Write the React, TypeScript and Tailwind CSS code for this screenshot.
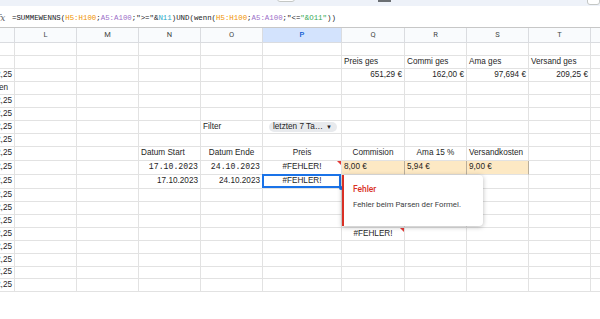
import React from "react";

type Cell = { t?: React.ReactNode; a?: "l" | "c" | "r"; c?: string; x?: React.ReactNode };

const widths = [
  "w-[15px]",
  "w-[62px]",
  "w-[62px]",
  "w-[62px]",
  "w-[62px]",
  "w-[79px]",
  "w-[63px]",
  "w-[62px]",
  "w-[62px]",
  "w-[62px]",
  "w-[20px]",
];
const letters = ["", "L", "M", "N", "O", "P", "Q", "R", "S", "T", ""];

const k: Cell = { t: "2,25", a: "r" };
const mono = "font-['Liberation_Mono',monospace] text-[7.3px]";
const beige = "bg-[#fde9c4] border-r-[#b9ae9b]";

function Tri() {
  return (
    <span className="absolute right-0 top-0 w-0 h-0 border-t-[4px] border-l-[4px] border-t-[#e53935] border-l-transparent" />
  );
}

function Popup() {
  return (
    <div className="absolute left-0 top-0 z-20 w-[141px] h-[51px] bg-white border-l-2 border-[#d93025] rounded-r-[4px] shadow-[0_1px_5px_rgba(0,0,0,0.28)] pl-[9px] pt-[9px] font-['Roboto',sans-serif]">
      <div className="text-[8.4px] leading-[10px] font-medium text-[#d93025]">Fehler</div>
      <div className="mt-[6px] text-[7.8px] leading-[10px] text-[#3c4043]">Fehler beim Parsen der Formel.</div>
    </div>
  );
}

const rows: { h: string; cells: Record<number, Cell> }[] = [
  { h: "h-[13px]", cells: {} },
  {
    h: "h-[13px]",
    cells: { 6: { t: "Preis ges" }, 7: { t: "Commi ges" }, 8: { t: "Ama ges" }, 9: { t: "Versand ges" } },
  },
  {
    h: "h-[13px]",
    cells: {
      0: k,
      6: { t: "651,29 €", a: "r" },
      7: { t: "162,00 €", a: "r" },
      8: { t: "97,694 €", a: "r" },
      9: { t: "209,25 €", a: "r" },
    },
  },
  { h: "h-[13px]", cells: { 0: { t: "en", a: "r", c: "pr-[6px]" } } },
  { h: "h-[13px]", cells: { 0: k } },
  { h: "h-[13px]", cells: { 0: k } },
  {
    h: "h-[13px]",
    cells: {
      0: k,
      4: { t: "Filter" },
      5: {
        t: (
          <span className="ml-[4px] flex items-center h-[10px] w-[68px] rounded-full bg-[#e8eaed] pl-[4px] pr-[5px] justify-between">
            <span>letzten 7 Ta…</span>
            <span className="text-[6px]">▼</span>
          </span>
        ),
      },
    },
  },
  { h: "h-[13px]", cells: { 0: k } },
  {
    h: "h-[14px]",
    cells: {
      0: k,
      3: { t: "Datum Start" },
      4: { t: "Datum Ende", a: "c" },
      5: { t: "Preis", a: "c" },
      6: { t: "Commision", a: "c" },
      7: { t: "Ama 15 %", a: "c" },
      8: { t: "Versandkosten" },
    },
  },
  {
    h: "h-[14px]",
    cells: {
      0: k,
      3: { t: "17.10.2023", a: "r", c: mono },
      4: { t: "24.10.2023", a: "r", c: mono },
      5: { t: "#FEHLER!", a: "c", x: <Tri /> },
      6: { t: "8,00 €", c: beige },
      7: { t: "5,94 €", c: beige },
      8: { t: "9,00 €", c: beige + " border-r-[#8d8576]" },
    },
  },
  {
    h: "h-[14px]",
    cells: {
      0: k,
      3: { t: "17.10.2023", a: "r" },
      4: { t: "24.10.2023", a: "r" },
      5: {
        t: "#FEHLER!",
        a: "c",
        x: (
          <>
            <span className="absolute -left-[1px] -top-[1px] right-0 bottom-0 z-10 border-2 border-[#1a73e8]" />
            <span className="absolute -right-[2px] -bottom-[2px] z-10 w-[4px] h-[4px] rounded-full bg-[#1a73e8]" />
          </>
        ),
      },
      6: { x: <Popup /> },
    },
  },
  { h: "h-[13px]", cells: { 0: k } },
  { h: "h-[13px]", cells: { 0: k } },
  { h: "h-[13px]", cells: { 0: k } },
  { h: "h-[13px]", cells: { 0: k, 6: { t: "#FEHLER!", a: "c", x: <Tri /> } } },
  { h: "h-[13px]", cells: { 0: k } },
  { h: "h-[13px]", cells: { 0: k } },
  { h: "h-[12px]", cells: { 0: k } },
  { h: "h-[13px]", cells: { 0: k } },
];

const alignCls = { l: "justify-start pl-[2px]", c: "justify-center", r: "justify-end pr-[2px]" };

export default function App() {
  return (
    <div className="w-[600px] h-[319px] overflow-hidden bg-white font-['Liberation_Sans',Arial,sans-serif] text-[#1f1f1f]">
      {/* toolbar remnant */}
      <div className="h-[6px] bg-[#eef2f9] flex items-start">
        <div className="ml-[277px] -mt-[4px] w-[20px] h-[6px] bg-white border border-[#c4c7c5] rounded-b-[3px]" />
        <div className="ml-[83px] w-[14px] h-[1.5px] bg-[#6b6f73]" />
        <div className="ml-[196px] -mt-[4px] w-[14px] h-[9px] bg-white border border-[#c4c7c5] rounded-[3px]" />
      </div>

      {/* formula bar */}
      <div className="h-[22px] flex items-center border-b border-[#c7c7c7] pt-[5px]">
        <span className="-ml-[3px] w-[15px] font-['DejaVu_Serif',serif] italic text-[9px] text-[#5f6368]">fx</span>
        <span className="font-['Liberation_Mono',monospace] text-[7.4px] whitespace-nowrap text-[#202124]">
          =SUMMEWENNS(<span className="text-[#f09300]">H5:H100</span>;<span className="text-[#9c6fc9]">A5:A100</span>;
          {'">="'}&amp;<span className="text-[#1fa9c9]">N11</span>)UND(wenn(<span className="text-[#f09300]">H5:H100</span>;
          <span className="text-[#9c6fc9]">A5:A100</span>;{'"<='}<span className="text-[#34a853]">{'"&O11"'}</span>))
        </span>
      </div>

      {/* grid */}
      <div className="flex flex-col">
        <div className="flex h-[15px] bg-[#f9fbfd]">
          {letters.map((l, i) => (
            <div
              key={i}
              className={`${widths[i]} shrink-0 flex items-center justify-center border-r border-b border-[#dadce0] text-[7.5px] font-['Roboto',sans-serif] ${
                i === 5 ? "bg-[#d3e3fd] text-[#0b57d0] font-medium" : "text-[#444746]"
              }`}
            >
              {l}
            </div>
          ))}
        </div>
        {rows.map((r, ri) => (
          <div key={ri} className={`flex ${r.h}`}>
            {widths.map((w, ci) => {
              const c = r.cells[ci];
              return (
                <div
                  key={ci}
                  className={`${w} shrink-0 relative flex items-center whitespace-nowrap border-r border-b border-[#e2e2e2] text-[8.2px] leading-none ${
                    ci === 0 ? "overflow-hidden" : ""
                  } ${alignCls[c?.a ?? "l"]} ${c?.c ?? ""}`}
                >
                  {c?.t}
                  {c?.x}
                </div>
              );
            })}
          </div>
        ))}
      </div>
    </div>
  );
}
